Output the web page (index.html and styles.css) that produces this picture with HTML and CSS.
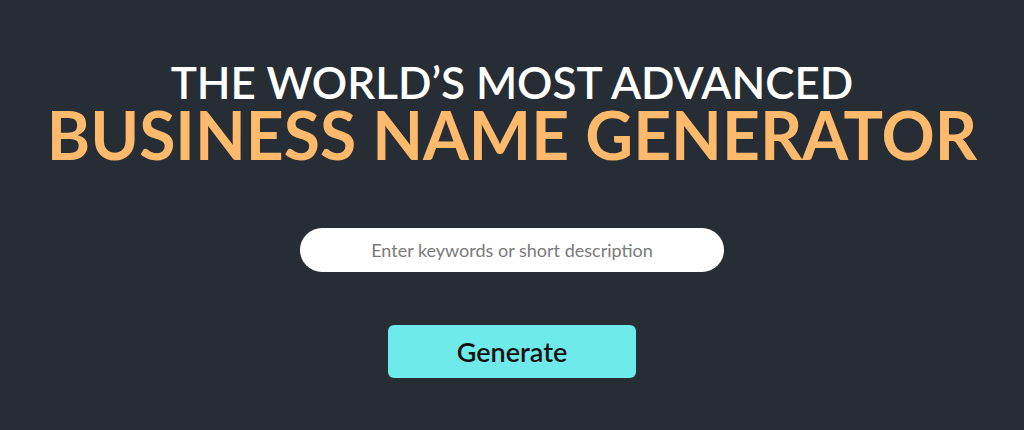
FILE: index.html
```html
<!DOCTYPE html>
<html>
<head>
<meta charset="utf-8">
<link rel="stylesheet" href="styles.css">
</head>
<body>
<main class="hero">
  <h1 class="title">
    <span class="line1">THE WORLD’S MOST ADVANCED</span>
    <span class="line2">BUSINESS NAME GENERATOR</span>
  </h1>
  <input class="search" type="text" placeholder="Enter keywords or short description">
  <button class="generate">Generate</button>
</main>
</body>
</html>
```
FILE: styles.css
```css
html, body {
  margin: 0;
  padding: 0;
  background: #262d34;
  font-family: Lato, "Open Sans", sans-serif;
}
.hero {
  width: 1024px;
  height: 430px;
  display: flex;
  flex-direction: column;
  align-items: center;
  box-sizing: border-box;
  padding-top: 60px;
}
.title {
  margin: 0;
  display: flex;
  flex-direction: column;
  align-items: center;
}
.line1 {
  color: #ffffff;
  font-size: 44px;
  line-height: 44px;
  font-weight: 600;
}
.line2 {
  color: #fdb96c;
  font-size: 66px;
  line-height: 61px;
  font-weight: 700;
}
.search {
  margin-top: 63px;
  width: 424px;
  height: 44px;
  box-sizing: border-box;
  border: none;
  border-radius: 22px;
  background: #ffffff;
  text-align: center;
  font-family: Lato, sans-serif;
  font-size: 18px;
  outline: none;
}
.search::placeholder {
  color: #7a7a7a;
}
.generate {
  margin-top: 53px;
  width: 248px;
  height: 53px;
  border: none;
  border-radius: 6px;
  background: #6eeaea;
  color: #111;
  font-family: Lato, sans-serif;
  font-size: 27px;
  font-weight: 600;
}
```
